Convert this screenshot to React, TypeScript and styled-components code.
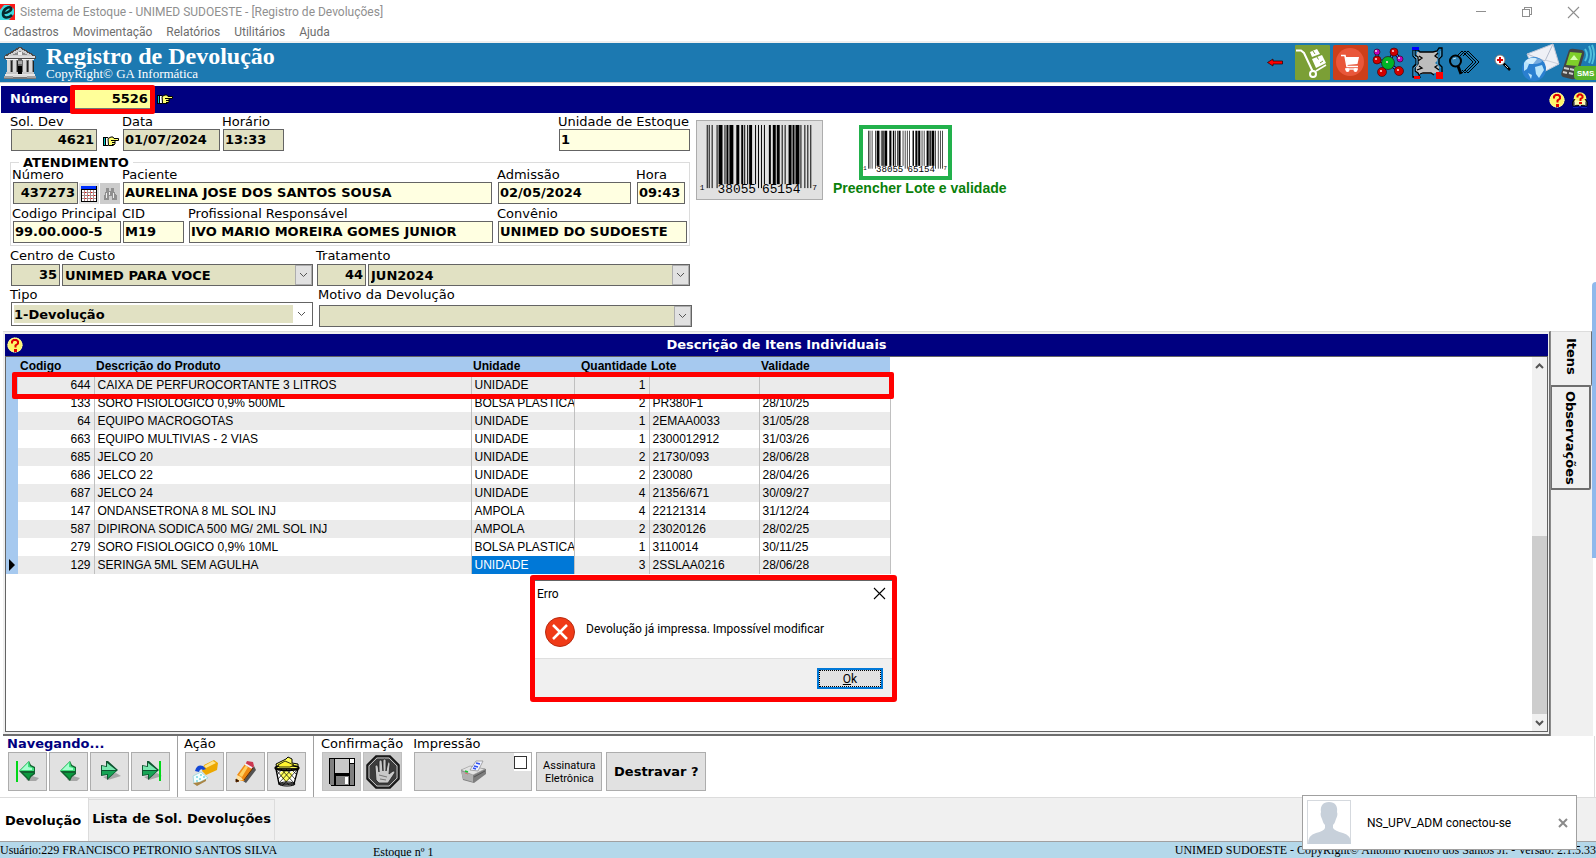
import React from "react";
import styled, { createGlobalStyle, css } from "styled-components";

const verdana = `Verdana, "DejaVu Sans", sans-serif`;
const arial = `"Liberation Sans", Arial, sans-serif`;
const times = `"Liberation Serif", "Times New Roman", serif`;
const segoe = `"Segoe UI", Roboto, sans-serif`;

const Global = createGlobalStyle`
  * { box-sizing: border-box; }
  body { margin: 0; background: #fff; color: #000; overflow: hidden; }
  button, input, select { font: inherit; color: inherit; border-radius: 0; margin: 0; }
  svg { display: block; flex: none; overflow: visible; }
`;

const Window = styled.div`
  position: relative;
  display: flex;
  flex-direction: column;
  min-height: 100vh;
  font: 13px/15px ${verdana};
`;

/* ---------- Title bar, menu, banner ---------- */

const TitleBar = styled.header`
  display: flex;
  align-items: center;
  height: 24px;
  gap: 5px;
  color: #8f8f8f;
  font: 12px/16px ${segoe};
`;
const TitleText = styled.span`
  flex: 1;
`;
const WindowButton = styled.button`
  display: flex;
  align-items: center;
  justify-content: center;
  width: 46px;
  height: 20px;
  margin-right: -5px;
  padding: 0;
  border: 0;
  background: none;
  &:last-child { margin-right: 0; }
`;
const MenuBar = styled.nav`
  display: flex;
  gap: 14px;
  height: 19px;
  padding-left: 4px;
  border-bottom: 2px solid #efefef;
  font: 12px/17px ${segoe};
`;
const MenuItem = styled.a`
  color: #6d6d6d;
  text-decoration: none;
`;
const Banner = styled.div`
  display: flex;
  align-items: center;
  height: 40px;
  margin-bottom: 3px;
  padding-left: 4px;
  border-bottom: 1px solid #cfcfcf;
  background: #1c79b1;
  color: #fff;
  font-family: ${times};
`;
const BannerTitles = styled.div`
  flex: 1;
  padding-left: 10px;
`;
const BannerTitle = styled.h1`
  margin: 0;
  font-size: 24px;
  line-height: 22px;
`;
const BannerSub = styled.p`
  margin: 0;
  font-size: 13px;
  line-height: 14px;
`;
const BannerTools = styled.div`
  display: flex;
  gap: 3px;
`;
const ToolButton = styled.button`
  display: flex;
  align-items: center;
  justify-content: center;
  width: 35px;
  height: 35px;
  padding: 0;
  border: 0;
  background: none;
`;

/* ---------- Record number ---------- */

const NumberBar = styled.div`
  display: flex;
  align-items: center;
  height: 27px;
  margin: 0 3px 0 1px;
  padding: 0 5px 0 9px;
  background: #000080;
  color: #fff;
  font-weight: bold;
`;
const NumberLabel = styled.label`
  padding-bottom: 2px;
`;
const NumberFrame = styled.span`
  z-index: 1;
  height: 29px;
  margin: 0 2px;
  border: 5px solid #f00;
  border-radius: 2px;
`;
const NumberInput = styled.input`
  display: block;
  width: 75px;
  height: 19px;
  padding: 0 2px 2px;
  border: 0;
  border-bottom: 1px solid #777;
  background: #ffff99;
  color: #000;
  font-weight: bold;
  text-align: right;
`;
const PlainButton = styled.button`
  display: flex;
  padding: 0;
  border: 0;
  background: none;
`;
const HandButton = styled(PlainButton)`
  align-items: center;
  justify-content: center;
  width: 18px;
  height: 20px;
`;
const HelpGroup = styled.div`
  display: flex;
  gap: 7px;
  margin-left: auto;
`;

/* ---------- Form ---------- */

const FormArea = styled.div`
  display: flex;
  align-items: flex-start;
  padding: 1px 0 4px 11px;
`;
const FormColumn = styled.form`
  display: flex;
  flex-direction: column;
  width: 681px;
`;
const FormRow = styled.div<{ $gap?: number; $top?: number; $alignTop?: boolean }>`
  display: flex;
  align-items: ${(p) => (p.$alignTop ? "flex-start" : "flex-end")};
  gap: ${(p) => p.$gap ?? 0}px;
  margin-top: ${(p) => p.$top ?? 0}px;
`;
const FieldBox = styled.div<{ $w?: number; $push?: boolean; $gap?: number }>`
  display: flex;
  flex-direction: column;
  gap: ${(p) => p.$gap ?? 0}px;
  width: ${(p) => (p.$w ? `${p.$w}px` : "auto")};
  ${(p) => p.$push && "margin-left: auto; margin-right: 2px;"}
`;
const FieldLabel = styled.label`
  margin-left: -1px;
  line-height: 15px;
  white-space: nowrap;
`;
const FieldLine = styled.div<{ $gap?: number }>`
  display: flex;
  align-items: flex-end;
  gap: ${(p) => p.$gap ?? 2}px;
`;
type Tone = "cream" | "olive";
const tone = { cream: "#ffffe1", olive: "#e1e1c3" };
const TextInput = styled.input<{ $tone?: Tone; $w?: number; $right?: boolean }>`
  width: ${(p) => (p.$w ? `${p.$w}px` : "100%")};
  height: 22px;
  padding: 0 2px 1px 1px;
  border: 1px solid #646464;
  background: ${(p) => tone[p.$tone ?? "cream"]};
  font-weight: bold;
  text-align: ${(p) => (p.$right ? "right" : "left")};
`;
const ComboBox = styled.div<{ $w: number; $light?: boolean }>`
  display: flex;
  width: ${(p) => p.$w}px;
  height: ${(p) => (p.$light ? 24 : 22)}px;
  padding: ${(p) => (p.$light ? "2px" : "0")};
  border: 1px solid #646464;
  background: ${(p) => (p.$light ? "#fff" : tone.olive)};
`;
const ComboSelect = styled.select<{ $light?: boolean }>`
  flex: 1;
  min-width: 0;
  padding: 0 ${(p) => (p.$light ? 0 : 2)}px;
  border: 0;
  appearance: none;
  background: ${tone.olive};
  font-weight: bold;
`;
const ComboArrow = styled.span<{ $light?: boolean }>`
  display: flex;
  align-items: center;
  justify-content: center;
  width: 17px;
  border: 1px solid ${(p) => (p.$light ? "#fff" : "#adadad")};
  background: ${(p) => (p.$light ? "#fff" : "#e1e1e1")};
`;
const CareGroup = styled.fieldset`
  width: 680px;
  min-width: 0;
  margin: 4px 0 2px -1px;
  padding: 0 2px 2px;
  border: 1px solid #dcdcdc;
`;
const CareLegend = styled.legend`
  margin-left: 6px;
  padding: 0 4px;
  font-weight: bold;
  line-height: 15px;
`;
const MiniButton = styled.button<{ $off?: boolean }>`
  display: flex;
  align-items: center;
  justify-content: center;
  width: 20px;
  height: 21px;
  padding: 0;
  border: 0;
  background: ${(p) => (p.$off ? "#cccccc" : "#e1e1e1")};
`;
const BarcodeButton = styled.button`
  display: flex;
  width: 127px;
  height: 80px;
  margin: 6px 10px 0 4px;
  padding: 3px;
  border: 1px solid #adadad;
  background: #e1e1e1;
`;
const LotColumn = styled.div`
  padding-top: 11px;
  color: #0a800a;
  font: bold 14px/16px ${arial};
`;
const LotButton = styled.button`
  display: flex;
  align-items: center;
  justify-content: center;
  width: 93px;
  height: 55px;
  margin-left: 26px;
  padding: 0;
  border: 4px solid #22b14c;
  background: #fff;
`;

/* ---------- Items panel ---------- */

const Workspace = styled.main`
  display: flex;
  flex: 1;
  margin: 0 3px 0 3px;
`;
const Panel = styled.section`
  display: flex;
  flex: 1;
  flex-direction: column;
  padding: 2px 1px 2px 2px;
  border: solid #6e6e6e;
  border-width: 1px 1px 2px 0;
  border-top-color: #dcdcdc;
  background: #f0f0f0;
`;
const PanelTitle = styled.div`
  display: flex;
  align-items: center;
  height: 22px;
  padding: 0 2px;
  background: #000080;
  color: #fff;
`;
const PanelHeading = styled.h2`
  flex: 1;
  margin: 0 16px 0 0;
  font-size: 13px;
  line-height: 16px;
  text-align: center;
`;
const GridFrame = styled.div`
  position: relative;
  display: flex;
  flex: 1;
  justify-content: space-between;
  border: 1px solid #646464;
  background: #fff;
`;
const ItemTable = styled.table`
  align-self: flex-start;
  width: 884px;
  border-collapse: collapse;
  table-layout: fixed;
  font: 12px/18px ${arial};
`;
const HeadCell = styled.th<{ $right?: boolean }>`
  height: 19px;
  padding: 0 2px;
  overflow: visible;
  background: #a6c9ef;
  line-height: 19px;
  white-space: nowrap;
  text-align: ${(p) => (p.$right ? "right" : "left")};
`;
const BodyRow = styled.tr`
  background: #fff;
  &:nth-child(odd) { background: #ebebeb; }
`;
const Cell = styled.td<{ $right?: boolean; $on?: boolean }>`
  height: 18px;
  padding: 0 3px;
  overflow: hidden;
  border-right: 1px solid #c0c0c0;
  white-space: nowrap;
  text-align: ${(p) => (p.$right ? "right" : "left")};
  ${(p) => p.$on && css`background: #0078d7; color: #fff;`}
`;
const MarkCell = styled.td`
  padding: 0;
  background: #a6c9ef;
`;
const RowHighlight = styled.div`
  position: absolute;
  top: 15px;
  left: 6px;
  width: 882px;
  height: 27px;
  border: 5px solid #f00;
  border-radius: 2px;
  pointer-events: none;
`;
const ScrollTrack = styled.div`
  display: flex;
  flex-direction: column;
  width: 15px;
  background: #f0f0f0;
`;
const ScrollButton = styled.button`
  display: flex;
  align-items: center;
  justify-content: center;
  height: 17px;
  padding: 0;
  border: 0;
  background: none;
`;
const ScrollSpace = styled.div`
  flex: 163;
`;
const ScrollThumb = styled.div`
  flex: 179;
  background: #cdcdcd;
`;
const SideTabs = styled.div`
  display: flex;
  flex-direction: column;
  width: 43px;
  padding-right: 1px;
  border-left: 1px solid #8a8a8a;
  background: #f0f0f0;
`;
const SideTab = styled.button<{ $active?: boolean }>`
  width: ${(p) => (p.$active ? 41 : 40)}px;
  padding: ${(p) => (p.$active ? "6px 0 10px" : "4px 0 3px")};
  border: 0 solid #6e6e6e;
  border-width: ${(p) => (p.$active ? "1px 1px 1px 0" : "1px 2px 2px 1px")};
  border-top-color: ${(p) => (p.$active ? "#dcdcdc" : "#6e6e6e")};
  border-radius: 0 0 2px 0;
  background: #f0f0f0;
  font-weight: bold;
  writing-mode: vertical-rl;
`;
const EdgeStripe = styled.div`
  position: absolute;
  top: 282px;
  right: 0;
  width: 4px;
  height: 276px;
  border-radius: 4px 0 0 0;
  background: #8fb9ec;
`;

/* ---------- Bottom toolbar ---------- */

const ActionBar = styled.div`
  display: flex;
  height: 61px;
  margin-right: 1px;
  border-right: 1px solid #dcdcdc;
`;
const ActionGroup = styled.section<{ $pad: number; $line?: boolean }>`
  padding: 0 7px 0 ${(p) => p.$pad}px;
  ${(p) => p.$line && "border-right: 1px solid #a0a0a0;"}
`;
const GroupTitle = styled.h3<{ $strong?: boolean }>`
  margin: 0 0 1px -1px;
  font-size: 13px;
  font-weight: ${(p) => (p.$strong ? "bold" : "normal")};
  line-height: 15px;
  color: ${(p) => (p.$strong ? "#000080" : "#000")};
`;
const ButtonLine = styled.div<{ $gap?: number }>`
  display: flex;
  gap: ${(p) => p.$gap ?? 2}px;
`;
const ActionButton = styled.button<{ $w?: number; $off?: boolean }>`
  display: flex;
  align-items: center;
  justify-content: center;
  width: ${(p) => p.$w ?? 39}px;
  height: 39px;
  padding: 0;
  border: 1px solid ${(p) => (p.$off ? "#bfbfbf" : "#adadad")};
  background: ${(p) => (p.$off ? "#cccccc" : "#e1e1e1")};
`;
const PrintWrap = styled.div`
  position: relative;
`;
const PrintCheck = styled.label`
  position: absolute;
  top: 1px;
  right: 1px;
  display: flex;
  padding: 3px 4px 2px 0;
  background: #fff;
`;
const CheckInput = styled.input`
  width: 13px;
  height: 13px;
  border: 1px solid #333;
  appearance: none;
  background: #fff;
`;
const SmallCaption = styled.span`
  font: 11px/13px ${segoe};
`;
const StrongCaption = styled.span`
  font-weight: bold;
`;

/* ---------- Page tabs and status ---------- */

const PageTabs = styled.nav`
  display: flex;
  height: 45px;
  border-top: 1px solid #dcdcdc;
  border-bottom: 1px solid #a0a0a0;
  background: #f0f0f0;
`;
const PageTab = styled.button<{ $active?: boolean }>`
  padding: ${(p) => (p.$active ? "2px 7px 0 5px" : "0 3px 3px 3px")};
  height: ${(p) => (p.$active ? 43 : 41)}px;
  margin-top: ${(p) => (p.$active ? 0 : 1)}px;
  border: 0;
  border-right: 1px solid #dcdcdc;
  border-top: ${(p) => (p.$active ? 0 : 1)}px solid #dcdcdc;
  background: ${(p) => (p.$active ? "#fff" : "#f0f0f0")};
  font-weight: bold;
`;
const StatusBar = styled.footer`
  display: flex;
  height: 16px;
  overflow: hidden;
  background: #b4d8ea;
  font: 12px/16px ${times};
  white-space: nowrap;
`;
const StatusUser = styled.span`
  width: 373px;
`;
const StatusStock = styled.span`
  flex: 1;
  padding-top: 2px;
`;
const Toast = styled.aside`
  position: absolute;
  right: 19px;
  bottom: 8px;
  display: flex;
  align-items: center;
  width: 275px;
  height: 55px;
  padding: 0 9px 0 4px;
  border: 1px solid #a0a0a0;
  background: #fff;
  font: 12px/16px ${segoe};
`;
const ToastText = styled.span`
  flex: 1;
  padding-left: 15px;
`;

/* ---------- Error dialog ---------- */

const Dialog = styled.div`
  position: absolute;
  top: 575px;
  left: 530px;
  width: 367px;
  border: 5px solid #f00;
  border-radius: 3px;
  background: #fff;
  font: 12px/16px ${segoe};
`;
const DialogTitle = styled.div`
  display: flex;
  align-items: center;
  justify-content: space-between;
  height: 26px;
  padding: 0 7px 0 2px;
  border-top: 1px solid #646464;
`;
const DialogBody = styled.div`
  display: flex;
  gap: 11px;
  height: 52px;
  padding: 11px 10px 0;
`;
const DialogMessage = styled.p`
  margin: 4px 0 0;
`;
const DialogFoot = styled.div`
  display: flex;
  justify-content: flex-end;
  height: 39px;
  padding: 9px 9px 0;
  border-top: 1px solid #dfdfdf;
  background: #f0f0f0;
`;
const OkButton = styled.button`
  width: 66px;
  height: 21px;
  padding: 0;
  border: 2px solid #0078d7;
  outline: 1px dotted #000;
  outline-offset: -3px;
  background: #e1e1e1;
  line-height: 16px;
`;

/* ---------- Drawings ---------- */

const AppLogo = () => (
  <svg width="15" height="16" viewBox="0 0 15 16" aria-hidden="true">
    <rect width="15" height="16" fill="#fb1a1a" />
    <path d="M0 6L4 1H9L14 5V10L9 16H0Z" fill="#3fd8df" />
    <path d="M4 9C8 9 12 6 11 4C9 2 3 5 3 10C3 14 8 15 12 11" fill="none" stroke="#07282c" strokeWidth="2.6" />
  </svg>
);

const Bank = () => (
  <svg width="32" height="32" viewBox="0 0 32 32" shapeRendering="crispEdges" aria-hidden="true">
    <path d="M0 9L15 0H17L32 9V12H0Z" fill="#4a4a4a" />
    <path d="M3 9L16 1L29 9Z" fill="#cfcfcf" />
    <path d="M8 8L16 4L24 8Z" fill="#8c8c8c" />
    <path d="M14 5h4v3h-4z" fill="#eee" />
    <rect x="1" y="9" width="30" height="2" fill="#dedede" />
    <rect x="3" y="12" width="26" height="16" fill="#6a6a6a" />
    {[3, 9, 19, 25].map((x) => (
      <g key={x}>
        <rect x={x} y="12" width="4" height="15" fill="#d8d8d8" />
        <rect x={x + 3} y="13" width="1" height="13" fill="#8c8c8c" />
        <rect x={x - 1} y="12" width="6" height="1" fill="#f4f4f4" />
        <rect x={x - 1} y="25" width="6" height="2" fill="#c8c8c8" />
        <rect x={x + 4} y="14" width="1" height="11" fill="#222" />
      </g>
    ))}
    <rect x="14" y="14" width="4" height="3" fill="#aaa" />
    <rect x="14" y="19" width="4" height="8" fill="#000" />
    <rect x="1" y="27" width="30" height="2" fill="#e6e6e6" />
    <rect x="0" y="29" width="32" height="3" fill="#a2a2a2" />
    <rect x="9" y="28" width="14" height="4" fill="#dadada" />
    <path d="M9 30h14M0 31h32" stroke="#777" />
  </svg>
);

const Hand = () => (
  <svg width="16" height="11" viewBox="0 0 16 11" aria-hidden="true">
    <rect x="0" y="1" width="5" height="9" fill="#000" />
    <rect x="1" y="2" width="1" height="7" fill="#0cc" />
    <rect x="3" y="2" width="2" height="7" fill="#fff" />
    <path d="M5 2.500L8 1H10L11 2.500H15.500V4.500H12V8L10 9.500H5.500Z" fill="#ffff70" stroke="#000" />
    <path d="M8 4.500H12M9 6.500H12M9 8.500H11" stroke="#000" />
  </svg>
);

const Help = () => (
  <svg width="16" height="16" viewBox="0 0 16 16" aria-hidden="true">
    <circle cx="8" cy="8" r="7.6" fill="#fdf56a" />
    <circle cx="8" cy="8" r="7" fill="none" stroke="#fffbc8" strokeDasharray="1 1" />
    <path d="M5 6.5V4.5L6.5 3H9.5L11 4.5V6.5L8.5 8.5V10.5" fill="none" stroke="#e00000" strokeWidth="2" />
    <rect x="7" y="12" width="3" height="3" fill="#e00000" />
  </svg>
);

const HelpBook = () => (
  <svg width="16" height="16" viewBox="0 0 16 16" aria-hidden="true">
    <path d="M1 9.500L3 7V13L8 12L13 13V7L15 9.500V14L9 13.500L8 14.500L7 13.500L1 14Z" fill="#fff" stroke="#000" />
    <circle cx="8" cy="6.500" r="6.300" fill="#fdf56a" />
    <path d="M3 8L7.500 9L8 10L8.500 9L13 8V13L8 12.500L3 13Z" fill="#fffbb0" />
    <path d="M1 15.500H6L8 14.500L10 15.500H15" fill="none" stroke="#1020c0" />
    <path d="M5.500 5.500V4L7 2.500H9L10.500 4V5.500L8.500 7V9" fill="none" stroke="#e00000" strokeWidth="2" />
    <rect x="7" y="10" width="3" height="2" fill="#e00000" />
    <path d="M3 7L1 10V13M13 7L15 10V13" fill="none" stroke="#000" />
  </svg>
);

const ArrowLeftRed = () => (
  <svg width="16" height="9" viewBox="0 0 16 9" aria-hidden="true">
    <path d="M.5 4.500L6 1V3H15.500V6H6V8Z" fill="#f00" stroke="#200" strokeWidth=".7" />
  </svg>
);

const HandTruck = () => (
  <svg width="35" height="35" viewBox="0 0 35 35" aria-hidden="true">
    <rect width="35" height="35" rx="1" fill="#7b9f36" />
    <path d="M1 5.500H6L9 8L18 27" fill="none" stroke="#fff" strokeWidth="2" />
    <path d="M21 26L31 20" stroke="#fff" strokeWidth="1.600" />
    <circle cx="18" cy="29" r="3" fill="#7b9f36" stroke="#fff" strokeWidth="2" />
    <path d="M15 7L22 4L25 9L17 12ZM17 14L27 10L31 18L21 23Z" fill="#fff" />
    <path d="M18 6L20 9M22 12L23.500 14.500M25 18L28 16" stroke="#7b9f36" />
  </svg>
);

const CartTile = () => (
  <svg width="35" height="35" viewBox="0 0 35 35" aria-hidden="true">
    <rect width="35" height="35" rx="2" fill="#cd3f1a" />
    <circle cx="17" cy="17" r="14" fill="#e9573a" />
    <path d="M8 10.500H12L14 21.500H25" fill="none" stroke="#fff" strokeWidth="1.600" />
    <path d="M12.500 12H26L24.500 19L14 20Z" fill="#fff" />
    <path d="M12 24H25" stroke="#fff" strokeWidth="1.400" />
    <circle cx="14.500" cy="25" r="2" fill="#fff" />
    <circle cx="22.500" cy="25" r="2" fill="#fff" />
  </svg>
);

const Molecule = () => {
  const balls: [number, number, number, string][] = [
    [4, 4, 3, "#c000c0"], [21, 4, 4, "#d00000"], [4, 12, 4, "#d00000"],
    [27, 11, 3, "#c000c0"], [9, 24, 4.500, "#d00000"], [26, 23, 4.500, "#d00000"], [15, 15, 6.500, "#00b428"],
  ];
  return (
    <svg width="31" height="29" viewBox="0 0 31 29" aria-hidden="true">
      <path d="M4 4V12L15 15L21 4L27 11M15 15L9 24M15 15L26 23" fill="none" stroke="#000" strokeWidth="3" />
      <path d="M4 4V12L15 15L21 4L27 11M15 15L9 24M15 15L26 23" fill="none" stroke="#3f78ff" strokeWidth="1.500" />
      {balls.map(([x, y, r, c]) => (
        <g key={`${x}-${y}`}>
          <circle cx={x} cy={y} r={r} fill={c} stroke="#300" strokeWidth=".6" />
          <circle cx={x - 1} cy={y - 1} r="1.100" fill="#ffd0d0" />
        </g>
      ))}
    </svg>
  );
};

const PuzzleFrame = () => (
  <svg width="32" height="32" viewBox="0 0 32 32" aria-hidden="true">
    <path d="M6 5H26L27 13L24 16L28 19V25L21 27H8L5 25V19L8 16L5 12Z" fill="#bdbdbd" />
    <path d="M2 1V9L5 12V17L2 20V30H9L7 26L4 24V20L7 17V10L4 8V3H7L9 5H22L26 4L28 1H31V9L28 12V17L31 20V26M27 6L24 9L28 12M27 18L24 20L28 23M8 9L11 11L7 14M8 19L11 21L6 23M9 27L12 26H20L23 28" fill="none" stroke="#000" strokeWidth="1.300" />
    <path d="M3 4V9L6 12V18L3 21V29M29.500 4V9L26.500 12V18L29.500 21" fill="none" stroke="#4b97c4" />
    <rect x="1" y="0" width="7" height="3" fill="#00f" />
    <rect x="25" y="25" width="7" height="7" fill="#f00" />
    <rect x="3" y="29" width="6" height="3" fill="#f00" />
  </svg>
);

const SearchLayers = () => (
  <svg width="32" height="28" viewBox="0 0 32 28" aria-hidden="true">
    {[12, 15, 18].map((x) => (
      <path key={x} d={`M${x - 4} 7L${x + 1} 2L${x + 12} 13L${x + 1} 24L${x - 2} 21`} fill="none" stroke="#000" />
    ))}
    <circle cx="6.500" cy="12" r="5.500" fill="#2f83b6" stroke="#000" strokeWidth="2" />
    <path d="M9 17L12 25" stroke="#000" strokeWidth="3" />
    <path d="M4 10L7 9" stroke="#bfe0f2" />
  </svg>
);

const ZoomPlus = () => (
  <svg width="17" height="17" viewBox="0 0 17 17" aria-hidden="true">
    <path d="M9 9L16 16" stroke="#000" strokeWidth="2.500" />
    <path d="M11 11L14 14" stroke="#c8c8c8" />
    <circle cx="6" cy="6" r="5" fill="#fff" stroke="#777" />
    <path d="M6 3V9M3 6H9" stroke="#e00000" strokeWidth="2" />
  </svg>
);

const MailGlobe = () => (
  <svg width="39" height="38" viewBox="0 0 39 38" aria-hidden="true">
    <path d="M6 10L32 0L38 20L15 32Z" fill="#eef0f6" stroke="#bfc6d6" />
    <path d="M6 10L24 17L32 0" fill="none" stroke="#b4bbcc" />
    <path d="M15 32L20 16M38 20L24 16" stroke="#cbd0dc" />
    <circle cx="13" cy="25" r="12" fill="#2a7fd0" />
    <path d="M3 19C6 13 14 13 16 15L12 20L8 20L6 25L3 27ZM14 23L21 21L23 26L18 34L15 30ZM7 29L11 31L10 35Z" fill="#b9e4fb" />
    <ellipse cx="13" cy="17" rx="8" ry="3" fill="#fff" opacity=".35" />
  </svg>
);

const SmsText = styled.text`
  font: bold 8px ${arial};
  fill: #fff;
`;
const PhoneSms = () => (
  <svg width="35" height="36" viewBox="0 0 35 36" aria-hidden="true">
    <path d="M8 5Q10 3 14 4L21 5Q24 6 23 10L16 33Q14 35 10 34L2 32Q-1 30 1 26Z" fill="#444" />
    <path d="M9 7L21 8L17 21L5 20Z" fill="#7fcf2a" />
    <path d="M13 10L17 15H9Z" fill="#d8ffb0" />
    <path d="M3 23L8 24M9 24L13 25M2 27L6 28M8 28L12 29" stroke="#cfcfcf" strokeWidth="2" />
    <path d="M24 4Q28 10 24 16M28 1Q32 9 28 18M31 0Q35 9 31 19" fill="none" stroke="#4fc0dc" strokeWidth="2" />
    <path d="M17 21H35V35H17Q13 35 13 31V25Q13 21 17 21Z" fill="#57b52c" />
    <SmsText x="16" y="31">SMS</SmsText>
  </svg>
);

const Chevron = ({ up, heavy }: { up?: boolean; heavy?: boolean }) => (
  <svg width="9" height="6" viewBox="0 0 9 6" aria-hidden="true">
    <path d={up ? "M1 5L4.500 1.500L8 5" : "M1 1L4.500 4.500L8 1"} fill="none" stroke="#555" strokeWidth={heavy ? 2 : 1} />
  </svg>
);

const Cross = ({ size, color, weight = 1 }: { size: number; color: string; weight?: number }) => (
  <svg width={size} height={size} viewBox="0 0 10 10" aria-hidden="true">
    <path d="M0 0L10 10M10 0L0 10" stroke={color} strokeWidth={weight} />
  </svg>
);

const Calendar = () => (
  <svg width="16" height="16" viewBox="0 0 16 16" shapeRendering="crispEdges" aria-hidden="true">
    <rect width="16" height="16" fill="#000" />
    <rect x="0" y="0" width="15" height="3" fill="#0030ff" />
    <rect x="1" y="4" width="14" height="11" fill="#fff" />
    <path d="M1 6.500H15M1 9.500H15M1 12.500H15M3.500 4V15M6.500 4V15M9.500 4V15M12.500 4V15" stroke="#a88" />
    <path d="M4 6h1M10 6h1M7 9h1M13 9h1M4 12h1M10 12h1" stroke="#f00" />
  </svg>
);

const Binoculars = () => (
  <svg width="14" height="12" viewBox="0 0 14 12" shapeRendering="crispEdges" aria-hidden="true">
    <path d="M3 0h3v3h2V0h3v3l3 5v4H9V8H6v4H1V8l2-5z" fill="#8f8f8f" />
    <path d="M3 5h1v5H3zM10 5h1v5h-1zM6 4h1v3H6z" fill="#eee" />
  </svg>
);

const bars: [number, number][] = [
  [27, 1], [29, 1], [32, 1], [37, 1], [39, 4], [45, 1], [47, 2], [50, 4], [57, 3], [62, 2], [65, 1], [68, 1],
  [70, 3], [76, 1], [79, 1], [82, 1], [85, 1], [90, 2], [94, 3], [98, 3], [103, 1], [106, 1], [110, 3],
  [114, 2], [117, 4], [122, 1], [126, 1], [129, 1], [132, 1],
];
const guards = [27, 29, 32, 37, 79, 82, 122, 126, 129, 132];
const Digits = styled.text<{ $small?: boolean }>`
  font: ${(p) => (p.$small ? 8 : 13)}px "Liberation Mono", monospace;
  fill: #000;
`;
const Barcode = ({ width, tall }: { width: number; tall: number }) => (
  <svg width={width} viewBox={`21 0 118 ${tall + 13}`} aria-hidden="true">
    {bars.map(([x, w]) => (
      <rect key={x} x={x} y="1" width={w} height={guards.includes(x) ? tall + 4 : tall} fill="#000" />
    ))}
    <Digits x="38" y={tall + 10}>38055</Digits>
    <Digits x="83" y={tall + 10}>65154</Digits>
    <Digits x="20" y={tall + 7} $small>1</Digits>
    <Digits x="134" y={tall + 7} $small>7</Digits>
  </svg>
);

const NavArrow = ({ left, bar }: { left?: boolean; bar?: boolean }) => (
  <svg width="24" height="24" viewBox="0 0 24 24" aria-hidden="true">
    {left ? (
      <>
        <path d="M10 19L16 16L23 18L20 21H12Z" fill="#8f8f8f" opacity=".7" />
        <path d="M3 11L13 1L15 5L19 7V14L15 17L13 21Z" fill="#11612f" />
        <path d="M3 11L13 1L14 6L18 8V11Z" fill="#3fe07c" />
        <path d="M5 10L12 3V7L16 8V10Z" fill="#a8ffd0" />
        <path d="M7 13H18L14 16L13 19Z" fill="#0a9a3e" />
        {bar && <rect x="0" y="1" width="2" height="21" fill="#00d818" />}
      </>
    ) : (
      <>
        <path d="M5 17L18 13L23 16L10 20Z" fill="#8f8f8f" opacity=".7" />
        <path d="M3 5L8 6V1H10L20 10L9 20V15L3 16Z" fill="#0e5530" />
        <path d="M4 6L9 7V3L18 10H4Z" fill="#7ae8b0" />
        <path d="M4 11H18L10 18V14L4 15Z" fill="#17a455" />
        {bar && <rect x="20" y="1" width="2" height="20" fill="#00d818" />}
      </>
    )}
  </svg>
);

const NewRecord = () => (
  <svg width="28" height="28" viewBox="0 0 28 28" aria-hidden="true">
    <path d="M13 7L23 2L27 5L26 12L15 17L11 13Z" fill="#eda800" />
    <path d="M13 8L22 3L25 5L15 10Z" fill="#ffe48a" />
    <path d="M4 13Q6 6 12 8L15 11L12 12Q9 10 8 14Z" fill="#1347d6" />
    <path d="M2 18L10 14L17 20L9 24L3 26Z" fill="#f4ffff" stroke="#a7d9dd" />
    <path d="M5 19h2M9 17h2M8 21h2M12 19h2M5 23h2" stroke="#35c4d6" />
    <path d="M2 25L9 24L15 21V23L6 28Z" fill="#a98545" />
  </svg>
);

const Pencil = () => (
  <svg width="20" height="24" viewBox="0 0 20 24" aria-hidden="true">
    <path d="M7 21L18 6L20 10L10 23Z" fill="#222" opacity=".75" />
    <path d="M1 15L9 4L17 8L8 21L2 21Z" fill="#ef8a12" />
    <path d="M3 15L10 5L12 7L6 17Z" fill="#ffd060" />
    <path d="M11 1L17 2L18 6L16 9L9 5Z" fill="#cc3850" />
    <path d="M9 4L16 8" stroke="#f4f4f4" strokeWidth="2" />
    <path d="M1 15L5 17L7 20L0 22Z" fill="#ffe1a0" />
    <path d="M8 20L17 8M0 19L3 21L0 22Z" fill="#000" stroke="#5a2800" />
  </svg>
);

const Trash = () => (
  <svg width="26" height="31" viewBox="0 0 26 31" aria-hidden="true">
    <path d="M2 8L12 3L14 1L18 3V7L24 8V13H3Z" fill="#ffff58" stroke="#000" />
    <path d="M2 13L5 28H20L24 13Z" fill="#fff" stroke="#000" strokeWidth="1.300" />
    <path d="M6 17L10 14L17 17L19 15L17 22L12 26L8 22Z" fill="#ffff58" />
    <path d="M3 15L15 29M7 13L20 27M12 13L21 23M17 13L23 19M23 14L9 29M18 13L5 27M13 13L4 23M8 13L3 19" stroke="#000" strokeWidth=".7" />
    <ellipse cx="13" cy="12" rx="12" ry="2.500" fill="none" stroke="#000" strokeWidth="1.500" />
    <ellipse cx="13" cy="28" rx="8" ry="2" fill="none" stroke="#000" />
    <path d="M4 9L11 5L20 9L16 11H5Z" fill="#fff430" stroke="#000" strokeWidth=".8" />
  </svg>
);

const Floppy = () => (
  <svg width="26" height="28" viewBox="0 0 26 28" shapeRendering="crispEdges" aria-hidden="true">
    <path d="M0 0H26V28H2L0 26Z" fill="#000" />
    <rect x="1" y="1" width="4" height="26" fill="#808080" />
    <rect x="6" y="1" width="14" height="14" fill="#c8c8c8" />
    <rect x="21" y="1" width="4" height="4" fill="#fff" />
    <rect x="21" y="6" width="4" height="21" fill="#808080" />
    <rect x="7" y="18" width="13" height="9" fill="#808080" />
    <rect x="16" y="19" width="3" height="7" fill="#fff" />
  </svg>
);

const StopHand = () => (
  <svg width="34" height="34" viewBox="0 0 34 34" aria-hidden="true">
    <path d="M10 1H24L33 10V24L24 33H10L1 24V10Z" fill="#3c3c3c" stroke="#111" strokeWidth="1.500" />
    <path d="M11 3H23L31 11V23L23 31H11L3 23V11Z" fill="none" stroke="#bdbdbd" strokeWidth="1" />
    <path d="M10 25L9 11Q10 9 12 11L13 17V6Q15 4 16 6L17 16V5Q19 3 20 5V16L22 7Q24 6 24 9L23 19L27 16Q30 16 28 19L22 28H13Z" fill="#c9c9c9" stroke="#222" strokeWidth=".8" />
    <path d="M13 20L21 22M14 24L20 25" stroke="#777" />
  </svg>
);

const Printer = () => (
  <svg width="27" height="24" viewBox="0 0 27 24" aria-hidden="true">
    <path d="M1 10L11 6L26 9V14L14 23L3 20Z" fill="#7d7d7d" />
    <path d="M1 10L10 6L25 9L13 15Z" fill="#e3e3e3" stroke="#999" strokeWidth=".6" />
    <path d="M1 11L13 15V22L3 19Z" fill="#b0b0b0" />
    <path d="M10 10L16 1L23 1L18 11Z" fill="#f2f4ff" stroke="#888" strokeWidth=".7" />
    <path d="M16 3L20 4M14 6L18 7M13 8L16 9" stroke="#3050f0" strokeWidth="1.600" />
    <path d="M5 11L8 12" stroke="#19c832" strokeWidth="1.500" />
    <path d="M5 13L8 14" stroke="#d87070" />
    <path d="M14 17L25 11" stroke="#555" />
  </svg>
);

const ErrorSign = () => (
  <svg width="30" height="30" viewBox="0 0 30 30" aria-hidden="true">
    <circle cx="15" cy="15" r="14.500" fill="#f03a17" stroke="#b82a10" />
    <path d="M8 8L22 22M22 8L8 22" stroke="#fff" strokeWidth="2.500" />
  </svg>
);

const Avatar = () => (
  <svg width="45" height="45" viewBox="0 0 45 45" aria-hidden="true">
    <rect x=".5" y=".5" width="43" height="43" fill="#fff" stroke="#d5d9de" />
    <path d="M22 2C28 2 31 6 30 12C31 14 30 17 29 19Q28 23 26 25V28Q28 31 36 33Q44 35 44 44H1Q1 35 9 33Q17 31 18 28V25Q16 23 15 19C14 17 13 14 14 12C13 6 16 2 22 2Z" fill="#c7d0da" />
  </svg>
);

/* ---------- Data ---------- */

const items = [
  ["644", "CAIXA DE PERFUROCORTANTE 3 LITROS", "UNIDADE", "1", "", ""],
  ["133", "SORO FISIOLOGICO 0,9% 500ML", "BOLSA PLASTICA", "2", "PR380F1", "28/10/25"],
  ["64", "EQUIPO MACROGOTAS", "UNIDADE", "1", "2EMAA0033", "31/05/28"],
  ["663", "EQUIPO MULTIVIAS - 2 VIAS", "UNIDADE", "1", "2300012912", "31/03/26"],
  ["685", "JELCO 20", "UNIDADE", "2", "21730/093", "28/06/28"],
  ["686", "JELCO 22", "UNIDADE", "2", "230080", "28/04/26"],
  ["687", "JELCO 24", "UNIDADE", "4", "21356/671", "30/09/27"],
  ["147", "ONDANSETRONA 8 ML SOL INJ", "AMPOLA", "4", "22121314", "31/12/24"],
  ["587", "DIPIRONA SODICA 500 MG/ 2ML SOL INJ", "AMPOLA", "2", "23020126", "28/02/25"],
  ["279", "SORO FISIOLOGICO 0,9% 10ML", "BOLSA PLASTICA", "1", "3110014", "30/11/25"],
  ["129", "SERINGA 5ML SEM AGULHA", "UNIDADE", "3", "2SSLAA0216", "28/06/28"],
];
const columnWidths = [12, 76, 377, 103, 75, 110, 131];

/* ---------- Form parts ---------- */

type FieldProps = {
  id: string;
  label: string;
  value: string;
  w: number;
  tone?: Tone;
  right?: boolean;
  push?: boolean;
};
const Field = ({ id, label, value, w, tone: t, right, push }: FieldProps) => (
  <FieldBox $w={w} $push={push}>
    <FieldLabel htmlFor={id}>{label}</FieldLabel>
    <TextInput id={id} defaultValue={value} $tone={t} $right={right} />
  </FieldBox>
);

type ComboProps = { id: string; value: string; w: number; light?: boolean };
const Combo = ({ id, value, w, light }: ComboProps) => (
  <ComboBox $w={w} $light={light}>
    <ComboSelect id={id} defaultValue={value} $light={light}>
      <option>{value}</option>
    </ComboSelect>
    <ComboArrow $light={light}>
      <Chevron />
    </ComboArrow>
  </ComboBox>
);

const tools: [string, React.ReactNode][] = [
  ["Voltar", <ArrowLeftRed />],
  ["Estoque", <HandTruck />],
  ["Compras", <CartTile />],
  ["Composição", <Molecule />],
  ["Módulos", <PuzzleFrame />],
  ["Pesquisar", <SearchLayers />],
  ["Ampliar", <ZoomPlus />],
  ["E-mail", <MailGlobe />],
  ["SMS", <PhoneSms />],
];

export default function App() {
  return (
    <Window>
      <Global />
      <TitleBar>
        <AppLogo />
        <TitleText>Sistema de Estoque - UNIMED SUDOESTE - [Registro de Devoluções]</TitleText>
        <WindowButton aria-label="Minimizar">
          <svg width="10" height="10" viewBox="0 0 10 10"><path d="M0 4.500H10" stroke="#8f8f8f" /></svg>
        </WindowButton>
        <WindowButton aria-label="Restaurar">
          <svg width="10" height="10" viewBox="0 0 10 10" shapeRendering="crispEdges">
            <path d="M.5 2.500H7.500V9.500H.5ZM2.500 2V.5H9.500V7.500H8" fill="none" stroke="#8f8f8f" />
          </svg>
        </WindowButton>
        <WindowButton aria-label="Fechar"><Cross size={11} color="#8f8f8f" /></WindowButton>
      </TitleBar>
      <MenuBar>
        {["Cadastros", "Movimentação", "Relatórios", "Utilitários", "Ajuda"].map((m) => (
          <MenuItem key={m} href="#">{m}</MenuItem>
        ))}
      </MenuBar>
      <Banner>
        <Bank />
        <BannerTitles>
          <BannerTitle>Registro de Devolução</BannerTitle>
          <BannerSub>CopyRight© GA Informática</BannerSub>
        </BannerTitles>
        <BannerTools>
          {tools.map(([name, icon]) => (
            <ToolButton key={name} aria-label={name}>{icon}</ToolButton>
          ))}
        </BannerTools>
      </Banner>
      <NumberBar>
        <NumberLabel htmlFor="registro">Número</NumberLabel>
        <NumberFrame>
          <NumberInput id="registro" defaultValue="5526" />
        </NumberFrame>
        <PlainButton aria-label="Localizar registro"><Hand /></PlainButton>
        <HelpGroup>
          <PlainButton aria-label="Ajuda"><Help /></PlainButton>
          <PlainButton aria-label="Manual"><HelpBook /></PlainButton>
        </HelpGroup>
      </NumberBar>

      <FormArea>
        <FormColumn>
          <FormRow $gap={3}>
            <FieldBox>
              <FieldLabel htmlFor="sol">Sol. Dev</FieldLabel>
              <FieldLine $gap={5}>
                <TextInput id="sol" defaultValue="4621" $tone="olive" $w={86} $right />
                <HandButton type="button" aria-label="Localizar solicitação"><Hand /></HandButton>
              </FieldLine>
            </FieldBox>
            <Field id="data" label="Data" value="01/07/2024" w={97} tone="olive" />
            <Field id="horario" label="Horário" value="13:33" w={61} tone="olive" />
            <Field id="unidade" label="Unidade de Estoque" value="1" w={131} push />
          </FormRow>

          <CareGroup>
            <CareLegend>ATENDIMENTO</CareLegend>
            <FormRow $gap={3} $top={-3}>
              <FieldBox>
                <FieldLabel htmlFor="atend">Número</FieldLabel>
                <FieldLine $gap={1}>
                  <TextInput id="atend" defaultValue="437273" $tone="olive" $w={65} $right />
                  <MiniButton type="button" aria-label="Calendário"><Calendar /></MiniButton>
                  <MiniButton type="button" aria-label="Procurar" $off><Binoculars /></MiniButton>
                </FieldLine>
              </FieldBox>
              <FormRow $gap={6}>
                <Field id="paciente" label="Paciente" value="AURELINA JOSE DOS SANTOS SOUSA" w={369} />
                <Field id="admissao" label="Admissão" value="02/05/2024" w={133} />
                <Field id="hora" label="Hora" value="09:43" w={48} />
              </FormRow>
            </FormRow>
            <FormRow $gap={2} $top={2}>
              <Field id="codigo" label="Codigo Principal" value="99.00.000-5" w={108} />
              <FormRow $gap={5}>
                <Field id="cid" label="CID" value="M19" w={61} />
                <Field id="prof" label="Profissional Responsável" value="IVO MARIO MOREIRA GOMES JUNIOR" w={304} />
                <Field id="convenio" label="Convênio" value="UNIMED DO SUDOESTE" w={189} />
              </FormRow>
            </FormRow>
          </CareGroup>

          <FormRow $gap={4}>
            <FieldBox $gap={1}>
              <FieldLabel htmlFor="centro">Centro de Custo</FieldLabel>
              <FieldLine>
                <TextInput aria-label="Código do centro de custo" defaultValue="35" $tone="olive" $w={49} $right />
                <Combo id="centro" value="UNIMED PARA VOCE" w={251} />
              </FieldLine>
            </FieldBox>
            <FieldBox $gap={1}>
              <FieldLabel htmlFor="tratamento">Tratamento</FieldLabel>
              <FieldLine>
                <TextInput aria-label="Código do tratamento" defaultValue="44" $tone="olive" $w={49} $right />
                <Combo id="tratamento" value="JUN2024" w={322} />
              </FieldLine>
            </FieldBox>
          </FormRow>
          <FormRow $gap={6} $top={1} $alignTop>
            <FieldBox>
              <FieldLabel htmlFor="tipo">Tipo</FieldLabel>
              <Combo id="tipo" value="1-Devolução" w={302} light />
            </FieldBox>
            <FieldBox $gap={3}>
              <FieldLabel htmlFor="motivo">Motivo da Devolução</FieldLabel>
              <Combo id="motivo" value="" w={373} />
            </FieldBox>
          </FormRow>
        </FormColumn>

        <BarcodeButton aria-label="Ler código de barras">
          <Barcode width={118} tall={60} />
        </BarcodeButton>
        <LotColumn>
          <LotButton aria-label="Preencher lote">
            <Barcode width={83} tall={50} />
          </LotButton>
          Preencher Lote e validade
        </LotColumn>
      </FormArea>

      <Workspace>
        <Panel>
          <PanelTitle>
            <PlainButton aria-label="Ajuda dos itens"><Help /></PlainButton>
            <PanelHeading>Descrição de Itens Individuais</PanelHeading>
          </PanelTitle>
          <GridFrame>
            <ItemTable>
              <colgroup>
                {columnWidths.map((w, i) => <col key={i} width={w} />)}
              </colgroup>
              <thead>
                <tr>
                  <HeadCell aria-label="Linha atual" />
                  <HeadCell>Codigo</HeadCell>
                  <HeadCell>Descrição do Produto</HeadCell>
                  <HeadCell>Unidade</HeadCell>
                  <HeadCell $right>Quantidade</HeadCell>
                  <HeadCell>Lote</HeadCell>
                  <HeadCell>Validade</HeadCell>
                </tr>
              </thead>
              <tbody>
                {items.map((row, r) => {
                  const current = r === items.length - 1;
                  return (
                    <BodyRow key={row[0]}>
                      <MarkCell>
                        {current && (
                          <svg width="9" height="12" viewBox="0 0 9 12" aria-hidden="true">
                            <path d="M3 0L9 6L3 12Z" fill="#000" />
                          </svg>
                        )}
                      </MarkCell>
                      {row.map((text, c) => (
                        <Cell key={c} $right={c === 0 || c === 3} $on={current && c === 2}>{text}</Cell>
                      ))}
                    </BodyRow>
                  );
                })}
              </tbody>
            </ItemTable>
            <RowHighlight />
            <ScrollTrack>
              <ScrollButton aria-label="Rolar para cima"><Chevron up heavy /></ScrollButton>
              <ScrollSpace />
              <ScrollThumb />
              <ScrollButton aria-label="Rolar para baixo"><Chevron heavy /></ScrollButton>
            </ScrollTrack>
          </GridFrame>
        </Panel>
        <SideTabs>
          <SideTab $active>Itens</SideTab>
          <SideTab>Observações</SideTab>
        </SideTabs>
      </Workspace>

      <ActionBar>
        <ActionGroup $pad={8} $line>
          <GroupTitle $strong>Navegando...</GroupTitle>
          <ButtonLine>
            <ActionButton aria-label="Primeiro"><NavArrow left bar /></ActionButton>
            <ActionButton aria-label="Anterior"><NavArrow left /></ActionButton>
            <ActionButton aria-label="Próximo"><NavArrow /></ActionButton>
            <ActionButton aria-label="Último"><NavArrow bar /></ActionButton>
          </ButtonLine>
        </ActionGroup>
        <ActionGroup $pad={7} $line>
          <GroupTitle>Ação</GroupTitle>
          <ButtonLine>
            <ActionButton aria-label="Novo"><NewRecord /></ActionButton>
            <ActionButton aria-label="Editar"><Pencil /></ActionButton>
            <ActionButton aria-label="Excluir"><Trash /></ActionButton>
          </ButtonLine>
        </ActionGroup>
        <ActionGroup $pad={8}>
          <GroupTitle>Confirmação</GroupTitle>
          <ButtonLine>
            <ActionButton $off aria-label="Gravar"><Floppy /></ActionButton>
            <ActionButton $off aria-label="Cancelar"><StopHand /></ActionButton>
          </ButtonLine>
        </ActionGroup>
        <ActionGroup $pad={4}>
          <GroupTitle>Impressão</GroupTitle>
          <ButtonLine $gap={4}>
            <PrintWrap>
              <ActionButton $w={118} aria-label="Imprimir"><Printer /></ActionButton>
              <PrintCheck>
                <CheckInput type="checkbox" aria-label="Impressão direta" />
              </PrintCheck>
            </PrintWrap>
            <ActionButton $w={66}><SmallCaption>Assinatura<br />Eletrônica</SmallCaption></ActionButton>
            <ActionButton $w={100}><StrongCaption>Destravar ?</StrongCaption></ActionButton>
          </ButtonLine>
        </ActionGroup>
      </ActionBar>
      <PageTabs>
        <PageTab $active>Devolução</PageTab>
        <PageTab>Lista de Sol. Devoluções</PageTab>
      </PageTabs>
      <StatusBar>
        <StatusUser>Usuário:229 FRANCISCO PETRONIO SANTOS SILVA</StatusUser>
        <StatusStock>Estoque nº 1</StatusStock>
        <span>UNIMED SUDOESTE - CopyRight© Antonio Ribeiro dos Santos Jr. - Versão: 2.1.5.33</span>
      </StatusBar>

      <EdgeStripe />
      <Dialog role="alertdialog" aria-label="Erro">
        <DialogTitle>
          Erro
          <PlainButton aria-label="Fechar erro"><Cross size={11} color="#000" /></PlainButton>
        </DialogTitle>
        <DialogBody>
          <ErrorSign />
          <DialogMessage>Devolução já impressa. Impossível modificar</DialogMessage>
        </DialogBody>
        <DialogFoot>
          <OkButton><u>O</u>k</OkButton>
        </DialogFoot>
      </Dialog>
      <Toast>
        <Avatar />
        <ToastText>NS_UPV_ADM conectou-se</ToastText>
        <PlainButton aria-label="Dispensar"><Cross size={8} color="#8a8a8a" weight={2.500} /></PlainButton>
      </Toast>
    </Window>
  );
}
